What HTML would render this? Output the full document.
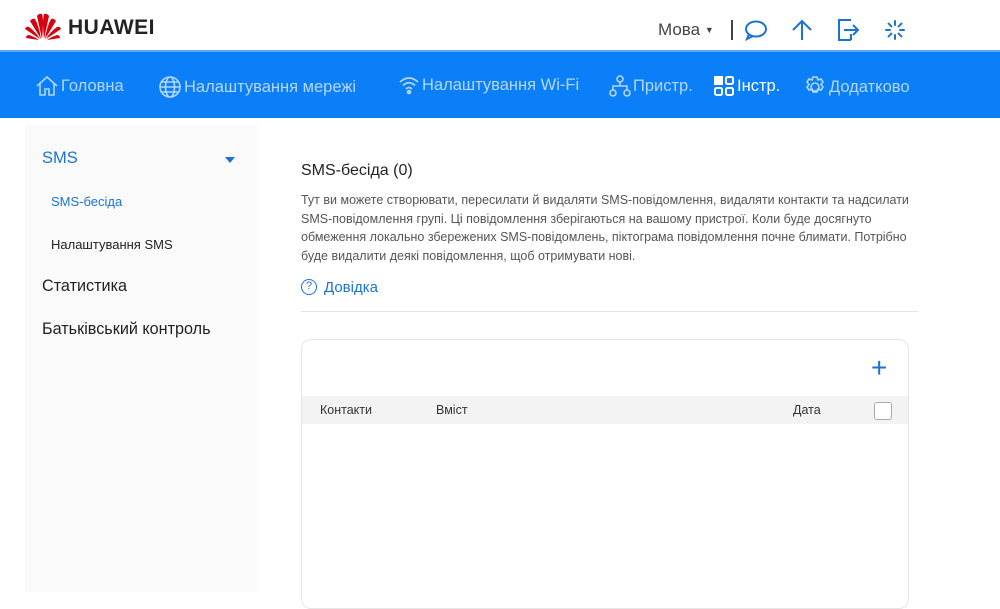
<!DOCTYPE html>
<html><head><meta charset="utf-8"><style>
*{margin:0;padding:0;box-sizing:border-box}
body{width:1000px;height:592px;overflow:hidden;background:#fff;font-family:"Liberation Sans",Arial,sans-serif;position:relative}
.abs{position:absolute}
.nav{left:0;top:50px;width:1000px;height:68px;background:#0b7ff8;border-top:2px solid #5aa8ff}
.ni{position:absolute;top:23px;color:#b5d6fb;font-size:16.5px;display:flex;align-items:center;gap:2px;white-space:nowrap}
.ni svg{stroke:#b5d6fb;fill:none;stroke-width:1.6}
.side{left:25px;top:125px;width:232px;height:467px;background:#fafafa}
</style></head><body>
<svg class="abs" style="left:23px;top:12px" width="40" height="28" viewBox="0 0 40 28">
<g fill="#d7000f">
<path d="M19 27 L14 4 Q16 1 19 2 Q21 8 19 27Z"/>
<path d="M21 27 L26 4 Q24 1 21 2 Q19 8 21 27Z"/>
<path d="M18 27 L7 9 Q9 6 12 7 Q16 14 18 27Z"/>
<path d="M22 27 L33 9 Q31 6 28 7 Q24 14 22 27Z"/>
<path d="M17 27 L2 17 Q3 14 6 15 Q13 20 17 27Z"/>
<path d="M23 27 L38 17 Q37 14 34 15 Q27 20 23 27Z"/>
<path d="M16 28 L3 26 Q3 23 6 23 Q12 25 16 28Z"/>
<path d="M24 28 L37 26 Q37 23 34 23 Q28 25 24 28Z"/>
</g></svg>
<div class="abs" style="left:68px;top:16px;font-size:21px;font-weight:bold;color:#222;letter-spacing:0.5px">HUAWEI</div>
<div class="abs" style="left:658px;top:20px;font-size:17px;color:#444">Мова <span style="font-size:9px;vertical-align:2px">▼</span></div>
<div class="abs" style="left:731px;top:20px;width:1.5px;height:20px;background:#444"></div>
<svg class="abs" style="left:744px;top:19px" width="24" height="22" viewBox="0 0 24 22" fill="none" stroke="#1a73d4" stroke-width="2"><ellipse cx="12" cy="10" rx="10" ry="7.5"/><path d="M5 15 L3 20 L9 17"/></svg>
<svg class="abs" style="left:790px;top:18px" width="24" height="24" viewBox="0 0 24 24" fill="none" stroke="#1a73d4" stroke-width="2"><path d="M12 22V3M3 12L12 3L21 12"/></svg>
<svg class="abs" style="left:837px;top:19px" width="24" height="22" viewBox="0 0 24 22" fill="none" stroke="#1a73d4" stroke-width="2"><path d="M14 1H2V21H14M14 7v0M14 15v6"/><path d="M7 11H21M16 6L21 11L16 16"/></svg>
<svg class="abs" style="left:884px;top:19px" width="22" height="22" viewBox="0 0 22 22" stroke="#1a73d4" stroke-width="2" stroke-linecap="round"><path d="M11 2v4M11 16v4M2 11h4M16 11h4M4.6 4.6l2.8 2.8M14.6 14.6l2.8 2.8M4.6 17.4l2.8-2.8M14.6 7.4l2.8-2.8"/></svg>
<div class="abs nav">
<div class="ni" style="left:35px"><svg width="24" height="22" viewBox="0 0 24 22"><path d="M2 11L12 2L22 11M5 9V20H10V14H14V20H19V9"/></svg>Головна</div>
<div class="ni" style="left:158px"><svg width="24" height="24" viewBox="0 0 24 24"><circle cx="12" cy="12" r="10"/><ellipse cx="12" cy="12" rx="4.5" ry="10"/><path d="M2 12H22M4 7H20M4 17H20"/></svg>Налаштування мережі</div>
<div class="ni" style="left:398px"><svg width="22" height="20" viewBox="0 0 22 20"><path d="M2 7Q11-1 20 7M5 10.5Q11 5 17 10.5M8 14Q11 11 14 14"/><circle cx="11" cy="17" r="1.5" fill="#b5d6fb"/></svg>Налаштування Wi-Fi</div>
<div class="ni" style="left:609px"><svg width="22" height="22" viewBox="0 0 22 22"><circle cx="11" cy="4" r="3"/><circle cx="4" cy="18" r="3"/><circle cx="18" cy="18" r="3"/><path d="M11 7V11M4 15V11H18V15"/></svg>Пристр.</div>
<div class="ni" style="left:713px;color:#fff"><svg width="22" height="22" viewBox="0 0 22 22" style="stroke:#fff;stroke-width:2"><rect x="2" y="2" width="7" height="7" fill="#fff"/><rect x="13" y="2" width="7" height="7" rx="1.5"/><rect x="2" y="13" width="7" height="7" rx="1.5"/><rect x="13" y="13" width="7" height="7" rx="1.5"/></svg>Інстр.</div>
<div class="ni" style="left:803px"><svg width="24" height="24" viewBox="0 0 24 24"><circle cx="12" cy="12" r="4"/><path d="M10 2h4l1 3 3-1 2 3-2 2.5 2 2.5-2 3-3-1-1 3h-4l-1-3-3 1-2-3 2-2.5-2-2.5 2-3 3 1z"/></svg>Додатково</div>
</div>
<div class="abs side"></div>
<div class="abs" style="left:42px;top:149px;font-size:16.5px;color:#1a73d4">SMS</div>
<div class="abs" style="left:225px;top:157px;border:5px solid transparent;border-top:6px solid #1a73d4;border-bottom:0"></div>
<div class="abs" style="left:51px;top:194px;font-size:13px;color:#1a73d4">SMS-бесіда</div>
<div class="abs" style="left:51px;top:237px;font-size:13px;color:#222">Налаштування SMS</div>
<div class="abs" style="left:42px;top:277px;font-size:16.2px;color:#222">Статистика</div>
<div class="abs" style="left:42px;top:320px;font-size:16.2px;color:#222">Батьківський контроль</div>
<div class="abs" style="left:301px;top:162px;font-size:16px;color:#222">SMS-бесіда (0)</div>
<div class="abs" style="left:301px;top:191px;width:620px;font-size:12.5px;line-height:18.5px;color:#555">Тут ви можете створювати, пересилати й видаляти SMS-повідомлення, видаляти контакти та надсилати SMS-повідомлення групі. Ці повідомлення зберігаються на вашому пристрої. Коли буде досягнуто обмеження локально збережених SMS-повідомлень, піктограма повідомлення почне блимати. Потрібно буде видалити деякі повідомлення, щоб отримувати нові.</div>
<div class="abs" style="left:301px;top:279px;width:16px;height:16px;border:1.5px solid #1a73d4;border-radius:50%;font-size:11px;color:#1a73d4;text-align:center;line-height:13px">?</div>
<div class="abs" style="left:324px;top:279px;font-size:15px;color:#1a73d4">Довідка</div>
<div class="abs" style="left:301px;top:311px;width:617px;height:1px;background:#e5e5e5"></div>
<div class="abs" style="left:301px;top:339px;width:608px;height:270px;border:1px solid #e6e6e6;border-radius:10px"></div>
<div class="abs" style="left:871px;top:352px;font-size:28px;color:#1a73d4;font-weight:300">+</div>
<div class="abs" style="left:302px;top:396px;width:606px;height:28px;background:#f3f3f3"></div>
<div class="abs" style="left:320px;top:403px;font-size:12.5px;color:#333">Контакти</div>
<div class="abs" style="left:436px;top:403px;font-size:12.5px;color:#333">Вміст</div>
<div class="abs" style="left:793px;top:403px;font-size:12.5px;color:#333">Дата</div>
<div class="abs" style="left:874px;top:402px;width:18px;height:18px;border:1px solid #aaa;border-radius:3px;background:#fff"></div>
</body></html>
